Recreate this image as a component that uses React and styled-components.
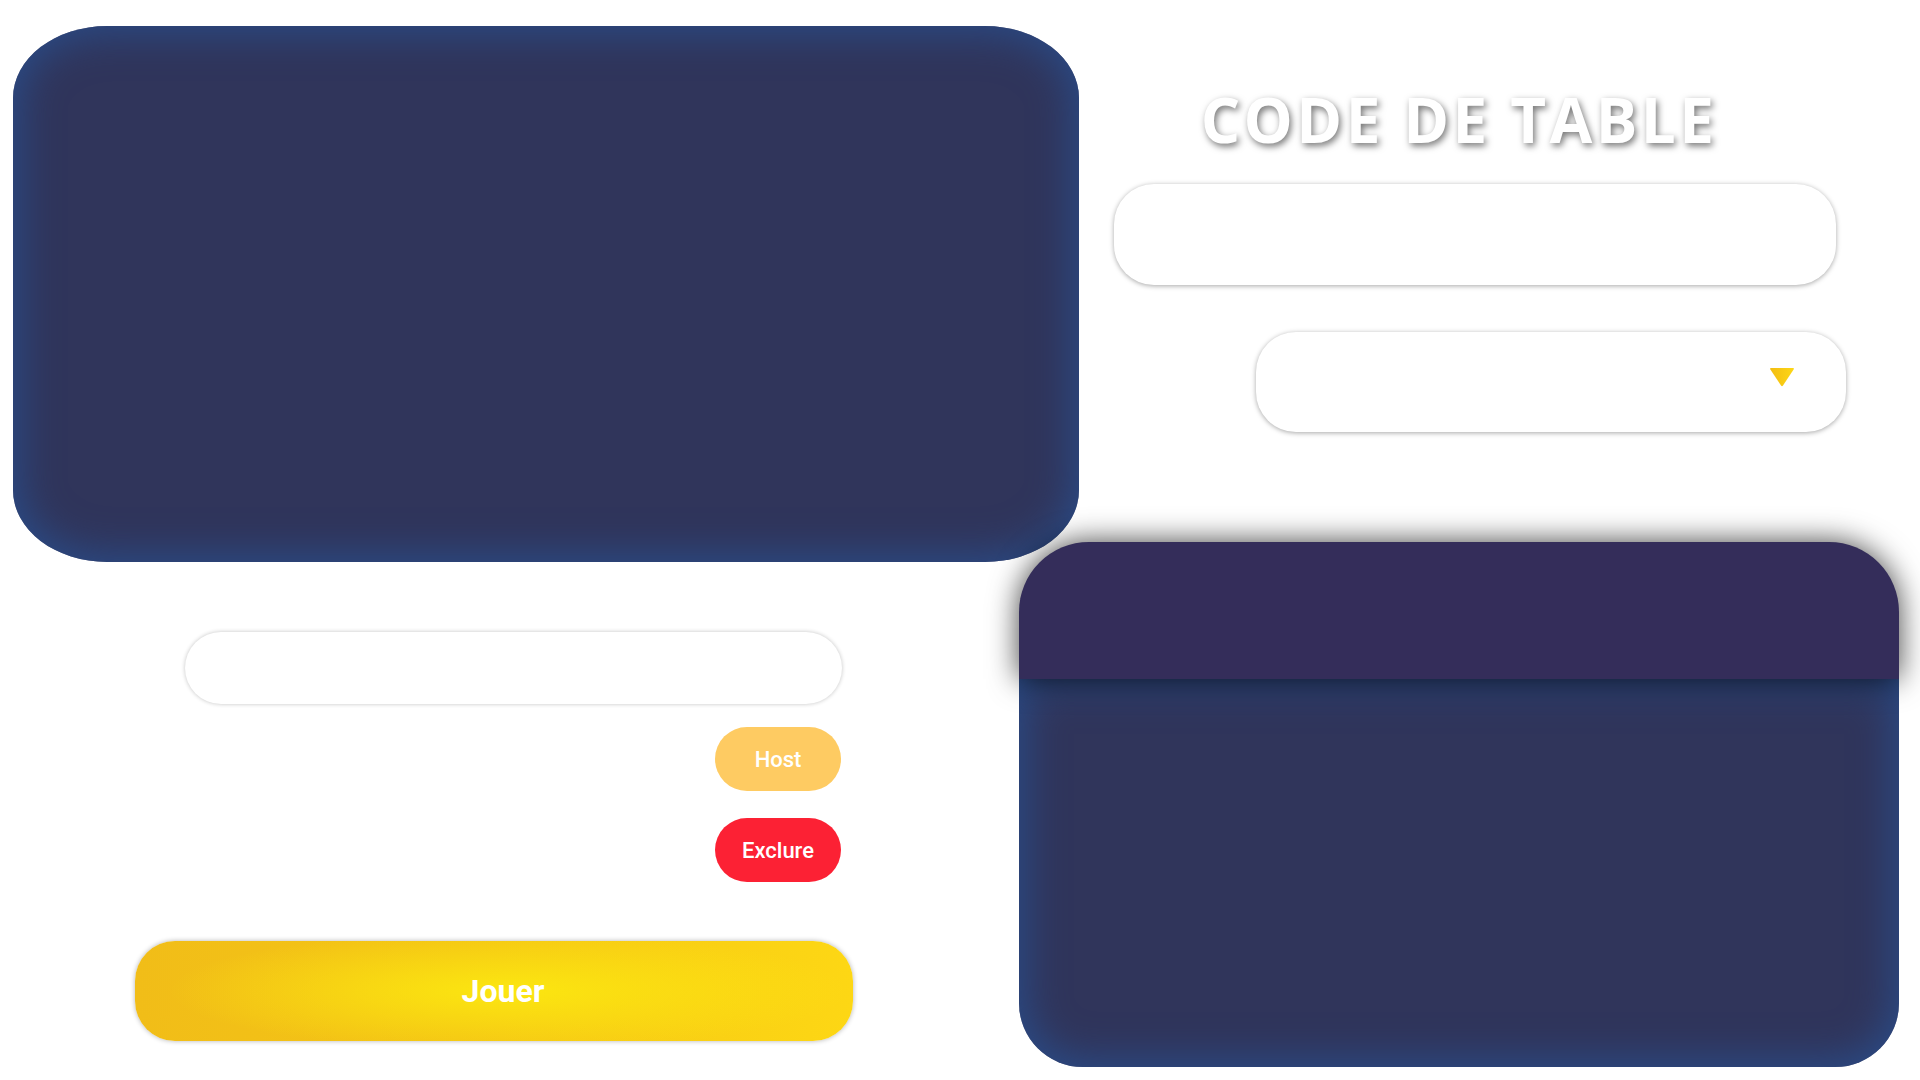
import React from "react";
import styled, { createGlobalStyle } from "styled-components";

const Global = createGlobalStyle`
  html, body {
    margin: 0;
    padding: 0;
    background: #ffffff;
  }
  body {
    font-family: Roboto, "Liberation Sans", sans-serif;
  }
  * { box-sizing: border-box; }
`;

const Page = styled.div`
  display: flex;
  align-items: flex-start;
  width: 1920px;
  height: 1080px;
  overflow: hidden;
`;

const LeftColumn = styled.div`
  flex-shrink: 0;
  width: 1066px;
  margin-left: 13px;
  padding-top: 26px;
  display: flex;
  flex-direction: column;
`;

const PlayersPanel = styled.div`
  height: 536px;
  background: #30355b;
  border-radius: 94px / 72px;
  box-shadow: inset 0 0 40px 6px #2a4c88;
`;

const Form = styled.div`
  display: flex;
  flex-direction: column;
  width: 718px;
  margin-left: 122px;
  margin-top: 70px;
`;

const NameInput = styled.input`
  width: 657px;
  height: 72px;
  margin-left: 50px;
  border: none;
  outline: none;
  border-radius: 36px;
  background: #ffffff;
  box-shadow: 0 0 4px rgba(0, 0, 0, 0.24);
  font-family: Roboto, "Liberation Sans", sans-serif;
  font-size: 22px;
  padding: 0 28px;
`;

const PillButton = styled.button`
  align-self: flex-end;
  margin-right: 12px;
  margin-top: ${(p) => p.$gap}px;
  width: 126px;
  height: 64px;
  border: none;
  border-radius: 32px;
  background: ${(p) => p.$bg};
  color: #ffffff;
  font-family: Roboto, "Liberation Sans", sans-serif;
  font-size: 22px;
  font-weight: 500;
  padding: 0;
  cursor: pointer;
`;

const PlayButton = styled.button`
  margin-top: 59px;
  width: 100%;
  height: 100px;
  border: none;
  border-radius: 40px;
  padding: 0 0 0 18px;
  background:
    radial-gradient(ellipse 340px 60px at 52% 50%, rgba(252, 232, 16, 0.95) 0%, rgba(252, 232, 16, 0) 100%),
    linear-gradient(to right, #f1bd18 0%, #f4c515 45%, #fdd714 100%);
  box-shadow: 0 0 5px rgba(0, 0, 0, 0.3);
  color: #ffffff;
  font-family: Roboto, "Liberation Sans", sans-serif;
  font-size: 32px;
  font-weight: 700;
  cursor: pointer;
`;

const RightColumn = styled.div`
  flex-shrink: 0;
  width: 880px;
  margin-left: -60px;
  display: flex;
  flex-direction: column;
`;

const Title = styled.h1`
  margin: 88px 0 0 0;
  text-align: center;
  font-family: "Open Sans", "DejaVu Sans", sans-serif;
  font-weight: 700;
  font-size: 62px;
  line-height: 62px;
  letter-spacing: 3.4px;
  color: #ffffff;
  text-shadow: 2px 3px 7px rgba(0, 0, 0, 0.55);
`;

const CodeInput = styled.input`
  margin-top: 34px;
  margin-left: 95px;
  width: 722px;
  height: 101px;
  border: none;
  outline: none;
  border-radius: 40px;
  background: #ffffff;
  box-shadow: 0 1px 5px rgba(0, 0, 0, 0.35);
  font-family: Roboto, "Liberation Sans", sans-serif;
  font-size: 26px;
  padding: 0 36px;
`;

const Select = styled.div`
  margin-top: 47px;
  margin-left: 237px;
  width: 590px;
  height: 100px;
  border-radius: 40px;
  background: #ffffff;
  box-shadow: 0 1px 5px rgba(0, 0, 0, 0.35);
  display: flex;
  align-items: center;
  justify-content: flex-end;
  padding-right: 51px;
`;

const Arrow = styled.svg`
  width: 26px;
  height: 20px;
  margin-bottom: 10px;
`;

const ChatCard = styled.div`
  margin-top: 110px;
  height: 525px;
  display: flex;
  flex-direction: column;
`;

const ChatHeader = styled.div`
  position: relative;
  z-index: 1;
  height: 137px;
  background: #342d5a;
  border-radius: 70px 70px 0 0;
  box-shadow: 0 0 30px rgba(0, 0, 0, 0.75);
`;

const ChatBody = styled.div`
  flex: 1;
  background: #30355b;
  border-radius: 0 0 64px 64px;
  box-shadow: inset 0 0 40px 6px #2a4c88;
`;

export default function App() {
  return (
    <>
      <Global />
      <Page>
        <LeftColumn>
          <PlayersPanel />
          <Form>
            <NameInput />
            <PillButton $bg="#fecb62" $gap={23}>Host</PillButton>
            <PillButton $bg="#fc2134" $gap={27}>Exclure</PillButton>
            <PlayButton>Jouer</PlayButton>
          </Form>
        </LeftColumn>
        <RightColumn>
          <Title>CODE DE TABLE</Title>
          <CodeInput />
          <Select>
            <Arrow viewBox="0 0 26 20">
              <defs>
                <linearGradient id="arrowGrad" x1="0" y1="0" x2="1" y2="0">
                  <stop offset="0" stopColor="#f3bd12" />
                  <stop offset="1" stopColor="#fdd716" />
                </linearGradient>
              </defs>
              <path
                d="M2 1 L24 1 Q25.5 1 24.6 2.4 L14 18.6 Q13 20 12 18.6 L1.4 2.4 Q0.5 1 2 1 Z"
                fill="url(#arrowGrad)"
              />
            </Arrow>
          </Select>
          <ChatCard>
            <ChatHeader />
            <ChatBody />
          </ChatCard>
        </RightColumn>
      </Page>
    </>
  );
}
